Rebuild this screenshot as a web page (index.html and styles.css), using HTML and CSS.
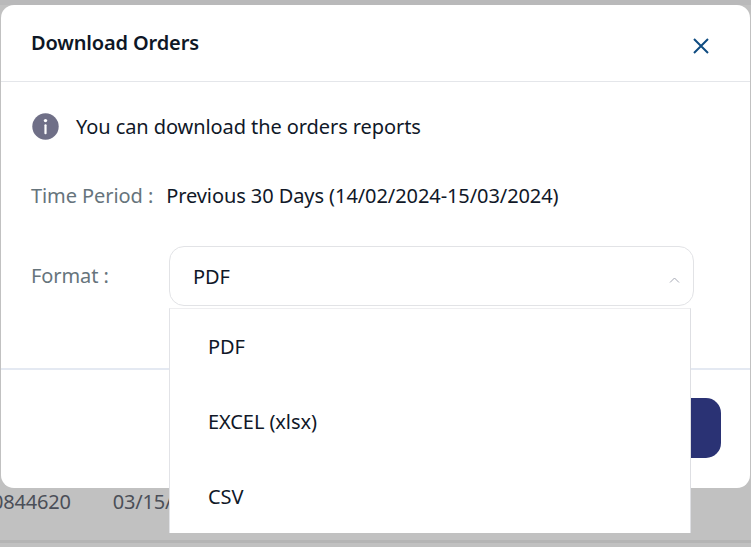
FILE: index.html
```html
<!DOCTYPE html>
<html lang="en">
<head>
<meta charset="utf-8">
<title>Download Orders</title>
<link rel="stylesheet" href="styles.css">
</head>
<body>
<div class="page">
  <section class="modal">
    <header class="modal-header">
      <h2 class="modal-title">Download Orders</h2>
      <button class="close" aria-label="Close">
        <svg width="16" height="16" viewBox="0 0 16 16"><path d="M1 1L15 15M15 1L1 15" stroke="#0f4c81" stroke-width="2" fill="none"/></svg>
      </button>
    </header>
    <div class="modal-body">
      <div class="info">
        <svg class="info-icon" width="27" height="27" viewBox="0 0 27 27"><circle cx="13.5" cy="13.5" r="13.2" fill="#6f6f87"/><circle cx="13.5" cy="7.6" r="1.7" fill="#fff"/><rect x="12.4" y="11.2" width="2.2" height="10" rx="1" fill="#fff"/></svg>
        <span>You can download the orders reports</span>
      </div>
      <div class="period">
        <span class="label">Time Period :</span>
        <span class="value">Previous 30 Days (14/02/2024-15/03/2024)</span>
      </div>
      <div class="format">
        <span class="label format-label">Format :</span>
        <div class="select-wrap">
          <div class="select">
            <span>PDF</span>
            <svg class="chev" width="11" height="6" viewBox="0 0 11 6"><path d="M1 5.5L5.5 1L10 5.5" stroke="#a5a8b4" stroke-width="1" fill="none"/></svg>
          </div>
          <ul class="menu">
            <li>PDF</li>
            <li>EXCEL (xlsx)</li>
            <li>CSV</li>
          </ul>
        </div>
      </div>
    </div>
    <footer class="modal-footer">
      <button class="download"></button>
    </footer>
  </section>
  <div class="row">
    <span class="cell-id">0844620</span>
    <span>03/15/</span>
  </div>
  <div class="row-line"></div>
</div>
</body>
</html>
```

FILE: styles.css
```css
* { box-sizing: border-box; }
html, body { margin: 0; height: 100%; }
body {
  background: #c1c1c1;
  font-family: "Noto Sans", "Open Sans", sans-serif;
  overflow: hidden;
}
.page {
  width: 751px;
  height: 547px;
  overflow: hidden;
  padding-top: 5px;
  background: linear-gradient(#b9b9ba 0, #b9b9ba 5px, #c1c1c1 5px);
}
.modal {
  width: 749px;
  height: 483px;
  margin-left: 1px;
  background: #fff;
  border-radius: 13px;
  display: flex;
  flex-direction: column;
}
.modal-header {
  height: 77px;
  flex: none;
  border-bottom: 1px solid #e4e6ea;
  display: flex;
  align-items: flex-start;
  justify-content: space-between;
  padding: 25px 41px 0 30px;
}
.modal-title {
  margin: 0;
  font-size: 20px;
  line-height: 26px;
  font-weight: 600;
  color: #0e1726;
  letter-spacing: -0.15px;
}
.close {
  border: 0;
  background: none;
  padding: 0;
  margin-top: 8px;
  width: 16px;
  height: 16px;
  display: block;
}
.close svg { display: block; }
.modal-body {
  height: 286px;
  flex: none;
  padding: 31px 0 0 30px;
  font-size: 20px;
  letter-spacing: -0.08px;
}
.info {
  display: flex;
  align-items: center;
  gap: 17px;
  height: 27px;
  margin-left: 1px;
  color: #101828;
}
.info-icon { flex: none; }
.period {
  display: flex;
  margin-top: 42px;
  height: 26px;
  align-items: center;
}
.label { color: #66747c; white-space: nowrap; }
.value { color: #101828; margin-left: 13px; white-space: nowrap; }
.format {
  display: flex;
  margin-top: 38px;
  align-items: flex-start;
}
.format-label { width: 138px; flex: none; padding-top: 16px; }
.select-wrap { position: relative; width: 525px; }
.select {
  height: 60px;
  border: 1px solid #e2e3e6;
  border-radius: 15px;
  display: flex;
  align-items: center;
  justify-content: space-between;
  padding: 0 13px 0 23px;
  color: #101828;
}
.chev { margin-top: 8px; }
.menu {
  position: absolute;
  top: 62px;
  left: 0;
  width: 522px;
  height: 225px;
  margin: 0;
  padding: 0;
  list-style: none;
  background: #fff;
  border-left: 1px solid #e2e3e7;
  border-right: 1px solid #dedfe3;
  border-top: 1px solid #eeeef0;
  z-index: 5;
}
.menu li {
  height: 75px;
  padding-left: 38px;
  display: flex;
  align-items: center;
  color: #101828;
}
.modal-footer {
  flex: 1;
  border-top: 2px solid #e4e9f2;
  padding: 28px 29px 0 0;
  display: flex;
  justify-content: flex-end;
}
.download {
  width: 200px;
  height: 60px;
  border: 0;
  border-radius: 15px;
  background: #2a3274;
}
.row {
  display: flex;
  height: 52px;
  align-items: flex-start;
  margin-left: -8px;
  padding-top: 0;
  font-size: 20px;
  color: #4b4f58;
  letter-spacing: -0.2px;
  gap: 42px;
}
.row-line { height: 3px; background: #b5b5b5; }
```
